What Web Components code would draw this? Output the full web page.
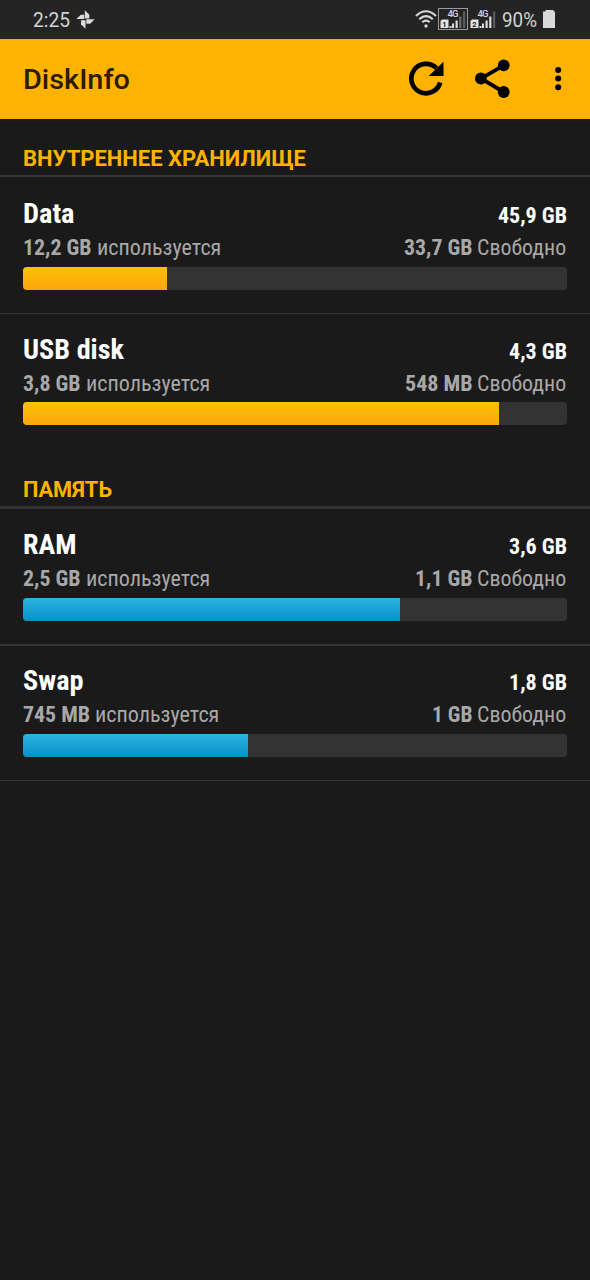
<!DOCTYPE html>
<html lang="ru">
<head>
<meta charset="utf-8">
<title>DiskInfo</title>
<style>
html,body{margin:0;background:#1a1a1a}
body{font-family:Roboto,"Noto Sans",sans-serif}
</style>
</head>
<body>
<disk-app></disk-app>
<script>
const define=(name,html,ready)=>customElements.define(name,class extends HTMLElement{
  constructor(){super();this.attachShadow({mode:'open'}).innerHTML=html;}
  connectedCallback(){if(ready)ready.call(this,this.shadowRoot);}
});

/* Text squeezed or stretched horizontally to a set advance width. */
define('fit-text',`<style>
:host{display:block;white-space:nowrap;flex:none}
span{display:inline-block;transform-origin:0 50%}
</style><span><slot></slot></span>`,function(r){
  const w=+this.getAttribute('width'),s=r.querySelector('span');
  const n=s.getBoundingClientRect().width;
  this.style.width=w+'px';
  if(n)s.style.transform=`scaleX(${w/n})`;
});

define('sim-signal',`<style>
:host{display:block;width:30px;height:22px;box-sizing:border-box;border:1px solid transparent}
:host([active]){border-color:#999}
svg{display:block}
text{font-family:Roboto,sans-serif}
</style><svg width="28" height="20" viewBox="0 0 28 20">
<text x="8.500" y="7.800" font-size="9.500" font-weight="500" fill="#d4d4d4" textLength="11">4G</text>
<path d="M3 10.500h6.500v8.500H1.500v-7z" fill="#e2e2e2"/>
<text class="n" x="3.300" y="17.700" font-size="7.500" font-weight="700" fill="#222"></text>
<path d="M10.500 17h2v2h-2zM13 14.500h2v4.500h-2zM16.500 11.500h2.200V19h-2.200z" fill="#dedede"/><path class="b4" d="M20.200 7.500h2.200V19h-2.200z" fill="#6b6b6b"/><path d="M24 2.500h2.200V19H24z" fill="#5c5c5c"/>
</svg>`,function(r){
  r.querySelector('.n').textContent=this.getAttribute('slot-number');
  if(!this.hasAttribute('active'))r.querySelector('.b4').setAttribute('fill','#dedede');
});

define('status-bar',`<style>
:host{display:flex;box-sizing:border-box;height:39px;background:#242424;color:#d2d2d2;padding:0 34px 1px 33px;align-items:center;font-size:19.500px}
.fan{margin-left:6px}
.wifi{margin:0 1px 0 auto}
fit-text{line-height:24px;margin-top:3px}
.pct{margin-left:4px}
.bat{margin-left:6px}
sim-signal+sim-signal{margin-left:0}
svg{display:block;flex:none}
</style>
<fit-text width="37">2:25</fit-text>
<svg class="fan" width="19" height="19" viewBox="0 0 19 19" fill="#dadada"><path d="M8.800 0.300L13.300 4.800V8.500H8.800z"/><path d="M18.700 9.300L14.200 13.700H10.300V9.300z"/><path d="M9.500 18.700L5 14.200V10.200H9.500z"/><path d="M0.300 9L4.800 4.700H8.200V9z"/></svg>
<svg class="wifi" width="22" height="18" viewBox="0 0 22 18" fill="none" stroke="#d8d8d8" stroke-width="2"><path d="M1 6Q11 -3.500 21 6M4.200 9.200Q11 3 17.800 9.200M7.300 12.300Q11 9 14.700 12.300"/><circle cx="11" cy="16" r="1.700" fill="#d8d8d8" stroke="none"/></svg>
<sim-signal active slot-number="1"></sim-signal><sim-signal slot-number="2"></sim-signal>
<fit-text class="pct" width="35">90%</fit-text>
<svg class="bat" width="13" height="18" viewBox="0 0 13 18" fill="#dadada"><path d="M2.500 0h8v1.500H12V18H0V1.500h2.500z"/></svg>`);

define('app-bar',`<style>
:host{display:flex;box-sizing:border-box;height:80px;background:#ffb300;color:#2a1d00;align-items:center;padding:0 28px 0 23px;font-weight:500;font-size:28px}
fit-text{margin-right:auto;line-height:36px;margin-top:2px}
svg{display:block;flex:none}
.share{margin-left:30px}.more{margin-left:43px}
</style>
<fit-text width="107">DiskInfo</fit-text>
<svg width="36" height="36" viewBox="0 0 36 36"><path d="M27.500 7.200A14.700 14.700 0 1 0 31.200 21.500" fill="none" stroke="#000" stroke-width="4.700"/><path d="M34.500 0.700V15H19.700z"/></svg>
<svg class="share" width="36" height="40" viewBox="0 0 36 40"><path d="M28.700 6.300L5.900 19.500L28.700 33" fill="none" stroke="#000" stroke-width="3.800"/><circle cx="28.700" cy="6.300" r="5.900"/><circle cx="5.900" cy="19.500" r="5.900"/><circle cx="28.700" cy="33" r="5.900"/></svg>
<svg class="more" width="8" height="26" viewBox="0 0 8 26"><circle cx="4.200" cy="4" r="3"/><circle cx="4.200" cy="12.600" r="3"/><circle cx="4.200" cy="21.300" r="3"/></svg>`);

define('section-title',`<style>
:host{display:block;box-sizing:border-box;height:58px;padding:26px 23px 0;border-bottom:2px solid #353535;color:#ffb300;font-weight:700;font-size:22px;line-height:28px}
:host([thick]){height:59px;border-bottom-width:3px;border-bottom-color:#323232}
</style><slot></slot>`);

define('volume-row',`<style>
:host{display:block;box-sizing:border-box;height:var(--height,136px);padding:var(--top,20px) 23px 0;border-bottom:var(--rule,1px) solid #353535;font-family:"Roboto Condensed",Roboto,sans-serif;font-stretch:75%}
:host([last]){border-bottom-color:transparent}
.line{display:flex;justify-content:space-between}
.head{height:34px;color:#fff;font-weight:700;font-size:28px;line-height:34px}
.total{font-size:22px;line-height:38px}
.info{height:var(--info,36px);color:#a8a8a8;font-size:22px;line-height:34px}
.pair{display:flex;gap:5.300px}
.pair+.pair{margin-right:.300px}
b{font-weight:700}
.track{height:23px;background:#333;border-radius:4px;overflow:hidden}
.fill{height:100%;background:linear-gradient(#ffc107,#f9a60d)}
:host([kind=memory]) .fill{background:linear-gradient(#2eb2e4,#0891c6)}
</style>
<div class="line head"><fit-text class="name"><slot name="name"></slot></fit-text><fit-text class="total"><slot name="total"></slot></fit-text></div>
<div class="line info"><div class="pair"><fit-text class="used"><b><slot name="used"></slot></b></fit-text><fit-text width="124.300">используется</fit-text></div>
<div class="pair"><fit-text class="free"><b><slot name="free"></slot></b></fit-text><fit-text width="89.300">Свободно</fit-text></div></div>
<div class="track"><div class="fill"></div></div>`,function(r){
  r.querySelector('.fill').style.width=this.getAttribute('fill')+'px';
});

const row=(name,nw,total,tw,used,uw,free,fw,fill,attrs='')=>
 `<volume-row fill="${fill}" data-w="${nw},${tw},${uw},${fw}" ${attrs}><span slot="name">${name}</span><span slot="total">${total}</span><span slot="used">${used}</span><span slot="free">${free}</span></volume-row>`;

define('disk-app',`<style>
:host{display:block;width:590px;height:1280px;background:#1a1a1a;overflow:hidden}
volume-row:nth-of-type(1){--height:137px}
volume-row:nth-of-type(2){--top:19px;--info:35px}
volume-row:nth-of-type(3){--height:137px;--top:19px;--rule:2px}
volume-row:nth-of-type(4){--height:135px;--top:18px}
</style>
<status-bar></status-bar><app-bar></app-bar>
<section-title><fit-text width="283">ВНУТРЕННЕЕ ХРАНИЛИЩЕ</fit-text></section-title>
${row('Data',51.5,'45,9 GB',69,'12,2 GB',68.5,'33,7 GB',68.5,144,'')}
${row('USB disk',101,'4,3 GB',58,'3,8 GB',57.5,'548 MB',67.5,476,'last')}
<section-title thick><fit-text width="89">ПАМЯТЬ</fit-text></section-title>
${row('RAM',53.5,'3,6 GB',58,'2,5 GB',57.5,'1,1 GB',57.5,377,'kind="memory"')}
${row('Swap',60.5,'1,8 GB',58,'745 MB',67,'1 GB',40.5,224.5,'kind="memory"')}`,function(r){
  for(const v of r.querySelectorAll('volume-row')){
    const w=v.dataset.w.split(',');
    ['name','total','used','free'].forEach((c,i)=>{
      const f=v.shadowRoot.querySelector('.'+c),s=f.shadowRoot.querySelector('span');
      s.style.transform='none';
      const n=s.getBoundingClientRect().width;
      f.style.width=w[i]+'px';
      s.style.transform=`scaleX(${w[i]/n})`;
    });
  }
});
</script>
</body>
</html>
